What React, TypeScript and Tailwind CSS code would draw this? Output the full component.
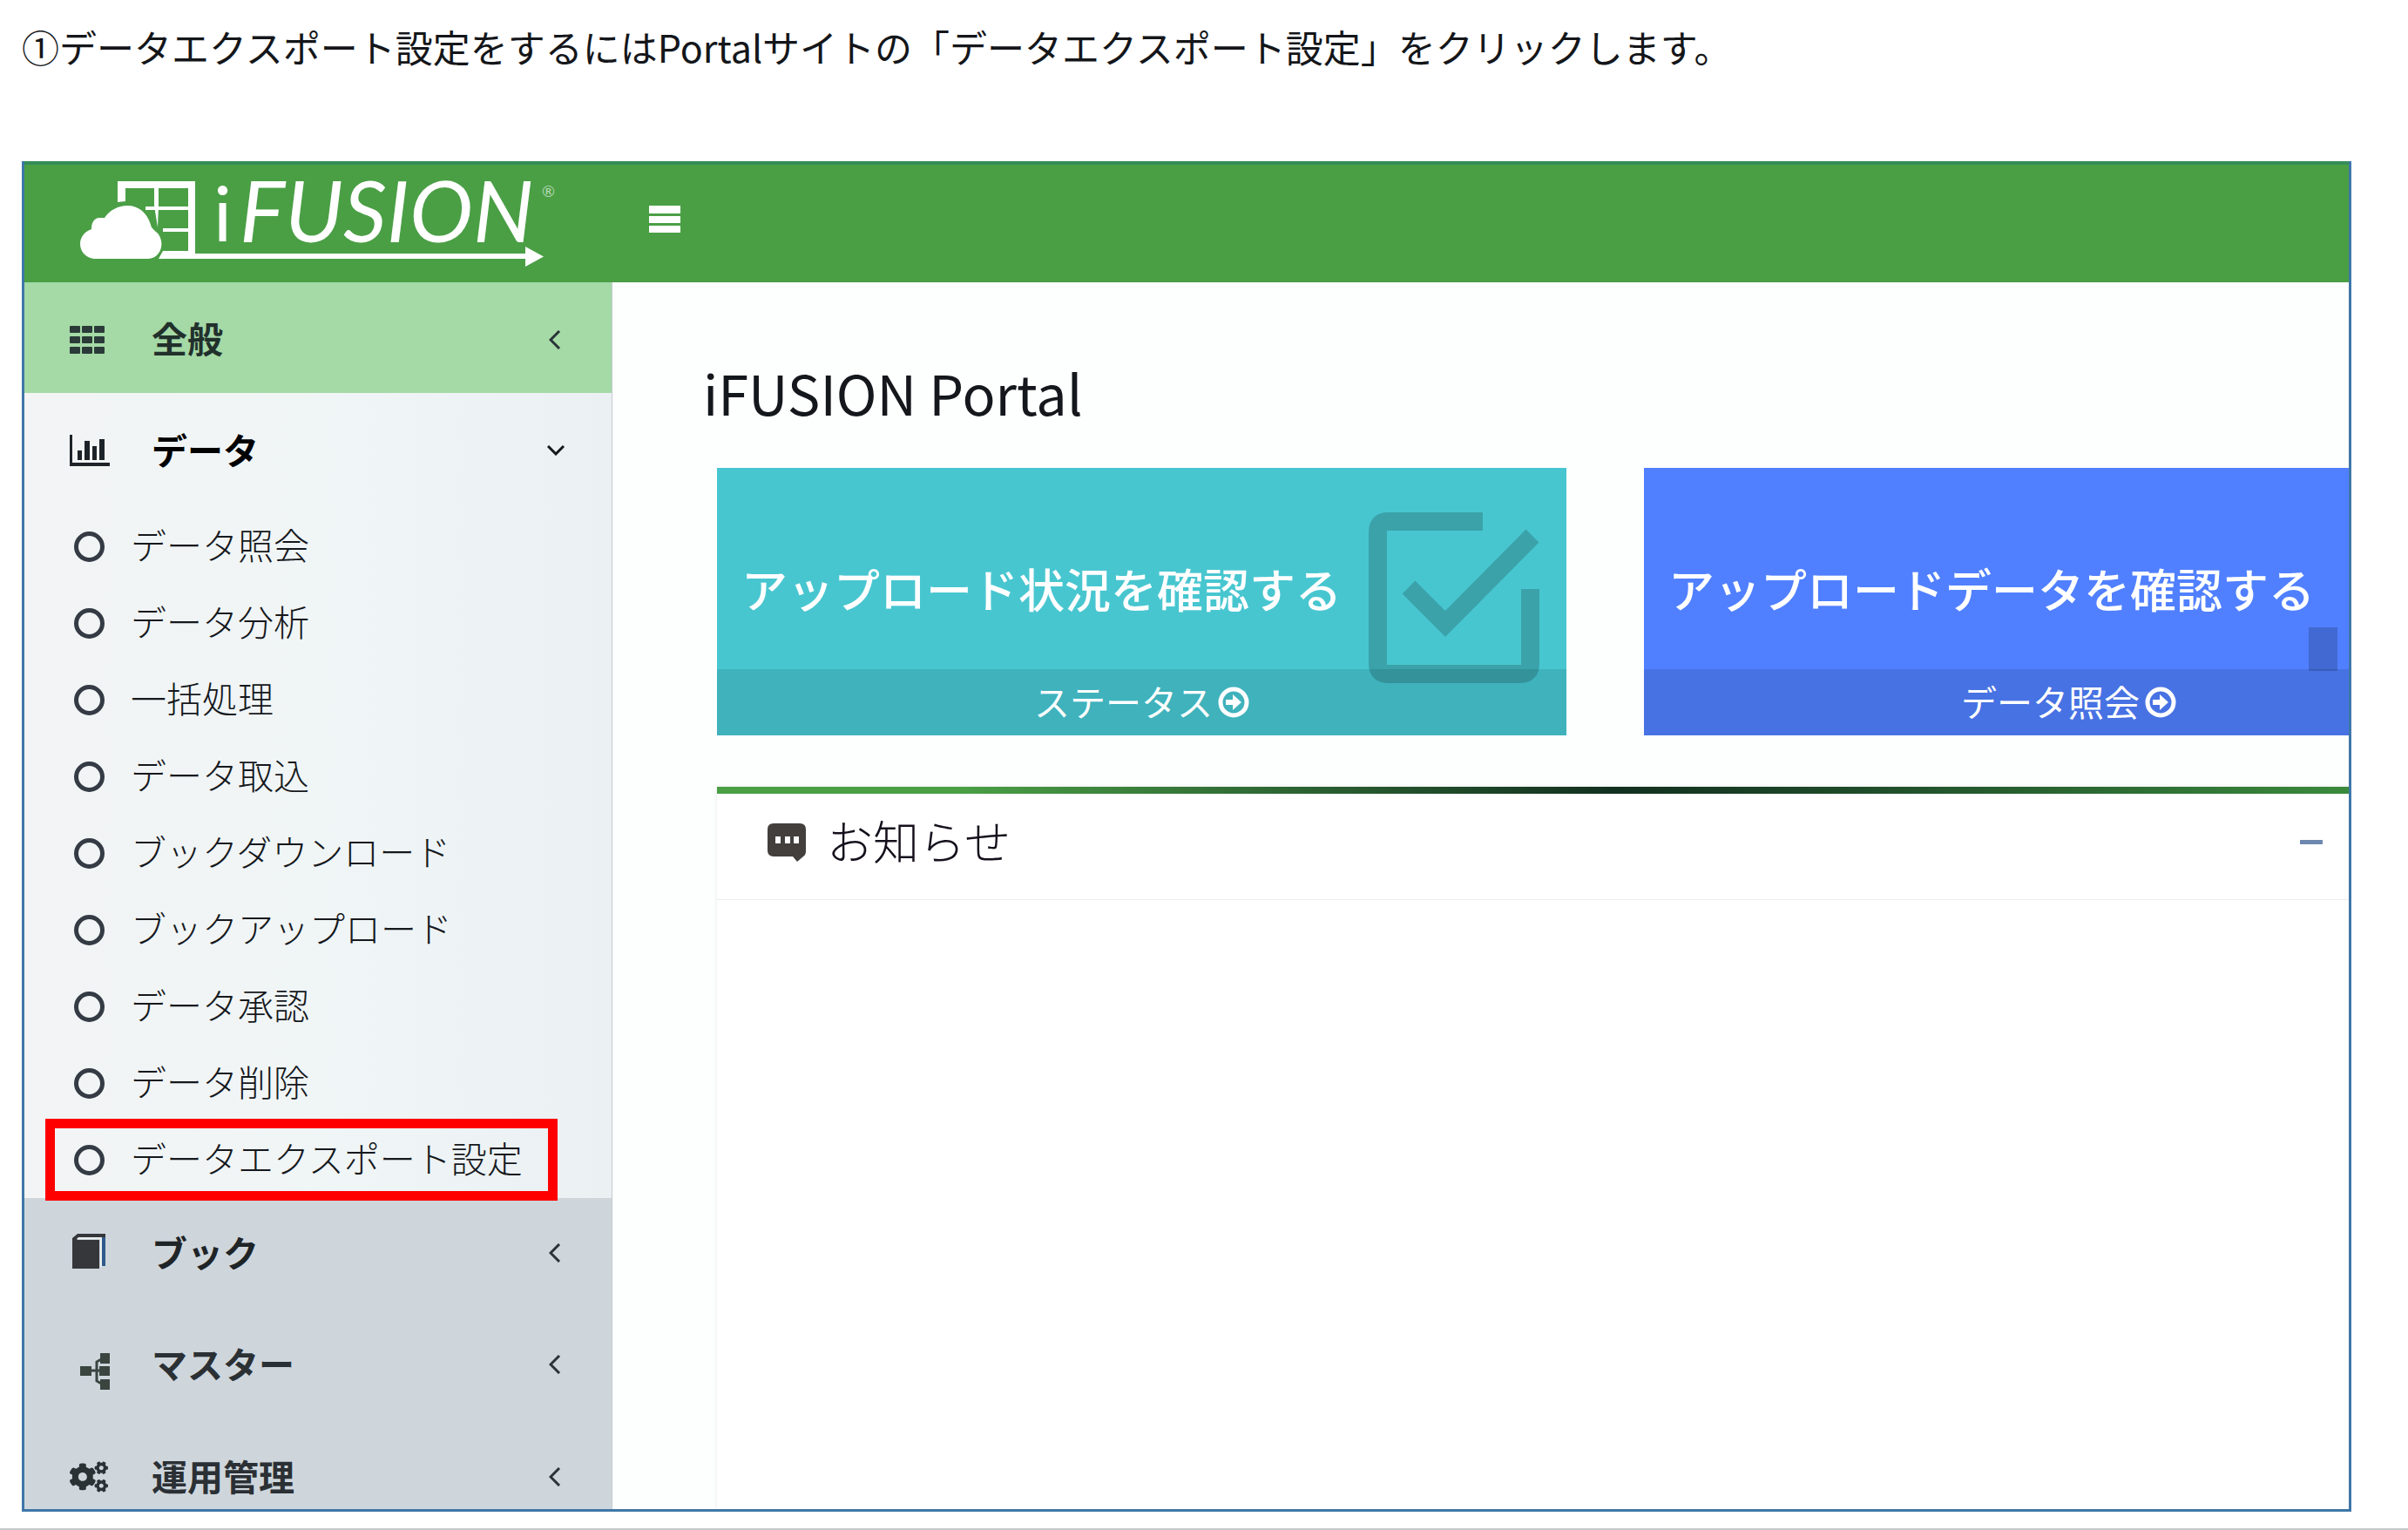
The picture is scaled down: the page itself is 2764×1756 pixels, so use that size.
import React from "react";
import { FaCogs } from "react-icons/fa";

const subItems = [
  "データ照会",
  "データ分析",
  "一括処理",
  "データ取込",
  "ブックダウンロード",
  "ブックアップロード",
  "データ承認",
  "データ削除",
];

function Logo() {
  return (
    <svg viewBox="0 0 580 130" className="h-[130px] w-[580px] shrink-0 overflow-visible" fill="#fff" role="img" aria-label="iFUSION">
      <path d="M55 42V18h89v83h299v6H102l5-9h29V76h-29v-4h29V51H87v-4h49V26h-34v20l-1 25-4-25V26H64v15z" />
      <path d="M140 101h383v-8l21 11.500-21 11.500v-9H140z" />
      <path d="M28 107C18 106 12 98 12 90c0-8 5-14 13-17 0-8 3-12 8-13h7c6-9 16-14 26-14 14 0 23 9 27 22 1 5 5 6 9 11 8 12 1 28-12 28z" />
      <text x="165" y="87" fontSize="88" fontFamily="Lato, sans-serif">i</text>
      <text x="195" y="88" fontSize="98" fontStyle="italic" fontFamily="Lato, sans-serif">FUSION</text>
      <text x="542" y="36" fontSize="18" fillOpacity="0.6" fontFamily="Lato, sans-serif">®</text>
    </svg>
  );
}

function GridIcon() {
  return (
    <svg viewBox="0 0 41 32" className="h-8 w-[41px]" fill="#2b3a38">
      {[0, 12, 24].map((y) => [0, 14, 28].map((x) => <rect key={`${x}-${y}`} x={x} y={y} width="12" height="8" rx="1" />))}
    </svg>
  );
}

function ChartIcon() {
  return (
    <svg viewBox="0 0 47 36" className="h-9 w-[47px]" fill="#1d2429">
      <path d="M0 0h3v32h43v4H0zM9 18h5v11H9zM17 7h6v22h-6zM26 13h5v16h-5zM34 5h6v24h-6z" />
    </svg>
  );
}

function BookIcon() {
  return (
    <svg viewBox="0 0 38 40" className="mb-1 ml-[3px] h-10 w-[38px]">
      <path d="M0 5 6 0h32v4H8L5 7h26v33H0z" fill="#35373a" />
      <path d="M34 4h4v33h-4z" fill="#2d5a8a" />
      <path d="M7 4h27v34h-2V6H5z" fill="#e8edef" />
    </svg>
  );
}

function TreeIcon() {
  return (
    <svg viewBox="0 0 34 42" className="mt-4 ml-3 h-[42px] w-[34px]" fill="#3a4540">
      <rect x="0" y="15" width="13" height="11" />
      <rect x="23" y="0" width="11" height="12" />
      <rect x="22" y="15" width="12" height="11" />
      <rect x="23" y="30" width="11" height="12" />
      <path d="M13 20h11M26 6l-7 4v22l7 4" fill="none" stroke="#3a4540" strokeWidth="3" />
    </svg>
  );
}

function GoIcon() {
  return (
    <svg viewBox="0 0 36 36" className="size-9" fill="none" stroke="#fff">
      <circle cx="18" cy="18" r="15" strokeWidth="5" />
      <path d="M9 15h8V9l10 9-10 9v-6H9z" fill="#fff" stroke="none" />
    </svg>
  );
}

function Chevron({ down }: { down?: boolean }) {
  return down ? (
    <svg viewBox="0 0 20 12" className="h-3 w-5" fill="none" stroke="#15181b" strokeWidth="3">
      <path d="m1 1 9 9 9-9" />
    </svg>
  ) : (
    <svg viewBox="0 0 14 22" className="mr-1 h-[22px] w-3.5" fill="none" stroke="#2b3338" strokeWidth="3">
      <path d="M12 1 2 11l10 10" />
    </svg>
  );
}

function MenuRow({ icon, label, down, tone }: { icon: React.ReactNode; label: string; down?: boolean; tone: string }) {
  return (
    <button type="button" className={`flex w-full shrink-0 items-center pr-[54px] pl-[52px] text-left ${tone}`}>
      <span className="flex w-[94px] items-center">{icon}</span>
      <span className="flex-1 pb-1 text-[41px] leading-none font-bold">{label}</span>
      <Chevron down={down} />
    </button>
  );
}

function SubItem({ label }: { label: string }) {
  return (
    <a href="#" className="flex h-[88px] items-center pl-[57px] text-[41px] leading-none font-light text-[#15181c]">
      <span className="mr-[30px] size-[35px] rounded-full border-[5px] border-[#343b44]" />
      <span className="pb-1.5">{label}</span>
    </a>
  );
}

function Card({ title, link, tone, footer, children }: { title: string; link: string; tone: string; footer: string; children: React.ReactNode }) {
  return (
    <section className={`relative flex h-[307px] w-[975px] shrink-0 flex-col text-white ${tone}`}>
      <h2 className="flex flex-1 items-center pt-[46px] pl-[28px] text-[53px] leading-none font-medium">{title}</h2>
      <a href="#" className={`flex h-[76px] items-center justify-center gap-1.5 text-[41px] leading-none ${footer}`}>
        <span className="pb-1">{link}</span>
        <GoIcon />
      </a>
      {children}
    </section>
  );
}

export default function App() {
  return (
    <div className="flex h-screen flex-col border-b-2 border-[#c5c8ca] bg-white pr-[65px] pl-[25px] font-['Noto_Sans_CJK_JP',sans-serif]">
      <p className="flex h-[185px] shrink-0 items-start pt-[32px] text-[43px] leading-[43px] whitespace-nowrap text-[#14161a]">
        ①データエクスポート設定をするにはPortalサイトの「データエクスポート設定」をクリックします。
      </p>
      <div className="mb-[19px] flex min-h-0 flex-1 flex-col overflow-hidden border-3 border-t-0 border-[#3f77a8]">
        <header className="flex h-[139px] shrink-0 items-start border-t-4 border-[#358c59] bg-[#4a9f45]">
          <div className="flex items-start pt-px pl-[52px]">
            <Logo />
          </div>
          <button type="button" aria-label="メニュー" className="mt-[47px] ml-[85px] flex w-9 flex-col gap-[3px]">
            <span className="h-[9px] bg-white" />
            <span className="h-[8px] bg-white" />
            <span className="h-[8px] bg-white" />
          </button>
        </header>
        <div className="flex min-h-0 flex-1">
          <nav className="flex w-[675px] shrink-0 flex-col overflow-hidden border-r border-[#c3cdd3] bg-[#ced6dc]">
            <MenuRow icon={<GridIcon />} label="全般" tone="h-[127px] pt-1 bg-[#a5d9a6] text-[#22302c]" />
            <div className="shrink-0 bg-linear-to-r from-[#f2f4f5] via-[#f0f5f6] to-[#ebf0f3]">
              <MenuRow icon={<ChartIcon />} label="データ" down tone="h-[132px] text-black" />
              {subItems.map((s) => (
                <SubItem key={s} label={s} />
              ))}
              <div className="relative">
                <SubItem label="データエクスポート設定" />
                <div className="pointer-events-none absolute -top-[3px] left-6 h-[94px] w-[588px] border-[11px] border-[#fe0000]" />
              </div>
            </div>
            <MenuRow icon={<BookIcon />} label="ブック" tone="h-[126px] text-[#1f2427]" />
            <MenuRow icon={<TreeIcon />} label="マスター" tone="h-[130px] text-[#2b3034]" />
            <MenuRow icon={<FaCogs className="size-11 text-[#2b3236]" />} label="運用管理" tone="h-[128px] text-[#2b3034]" />
          </nav>
          <main className="flex min-w-0 flex-1 flex-col overflow-hidden bg-[#fdfefe] pl-[120px]">
            <h1 className="mt-[90px] -ml-4 text-[63px] leading-[72px] text-[#14171c]">iFUSION Portal</h1>
            <div className="mt-[51px] flex gap-[89px]">
              <Card title="アップロード状況を確認する" link="ステータス" tone="bg-[#48c6d0]" footer="bg-[#3fb2bc]">
                <svg viewBox="0 0 196 196" className="absolute top-[51px] right-[31px] size-[196px]" fill="none" stroke="#000" strokeOpacity="0.18" strokeWidth="21">
                  <path d="M131 10.500H22Q10.500 10.500 10.500 22V174Q10.500 185.500 22 185.500H174Q185.500 185.500 185.500 174V88" />
                  <path d="M46 86 88 128 188 27" />
                </svg>
              </Card>
              <Card title="アップロードデータを確認する" link="データ照会" tone="bg-[#5080ff]" footer="bg-[#4772e3]">
                <svg viewBox="0 0 33 50" className="absolute top-[183px] left-[763px] h-[50px] w-[33px]" fill="#000" fillOpacity="0.18">
                  <rect width="33" height="50" />
                </svg>
              </Card>
            </div>
            <section className="mt-[59px] flex flex-1 flex-col bg-white shadow-[0_0_4px_#0000001a]">
              <div className="h-2 shrink-0 bg-linear-to-r from-[#4a9f45] from-15% via-[#12301f] via-55% to-[#3a8a3c]" />
              <div className="flex h-[122px] shrink-0 items-center border-b border-[#ebedee] pr-[30px] pb-2.5 pl-[58px]">
                <svg viewBox="0 0 44 44" className="mr-[24px] size-11">
                  <path d="M7 0h30q7 0 7 7v25q0 4-3 6l-7 6-5-6H7q-7 0-7-7V7q0-7 7-7z" fill="#433f3c" />
                  <path d="M9 15h6v8H9zM20 15h6v8h-6zM30 15h6v8h-6z" fill="#fff" />
                </svg>
                <h2 className="flex-1 pb-1 text-[53px] leading-none font-light text-[#15101c]">お知らせ</h2>
                <button type="button" aria-label="折りたたむ" className="flex h-10 items-center">
                  <span className="h-[5px] w-[26px] bg-[#6c88ae]" />
                </button>
              </div>
            </section>
          </main>
        </div>
      </div>
    </div>
  );
}
